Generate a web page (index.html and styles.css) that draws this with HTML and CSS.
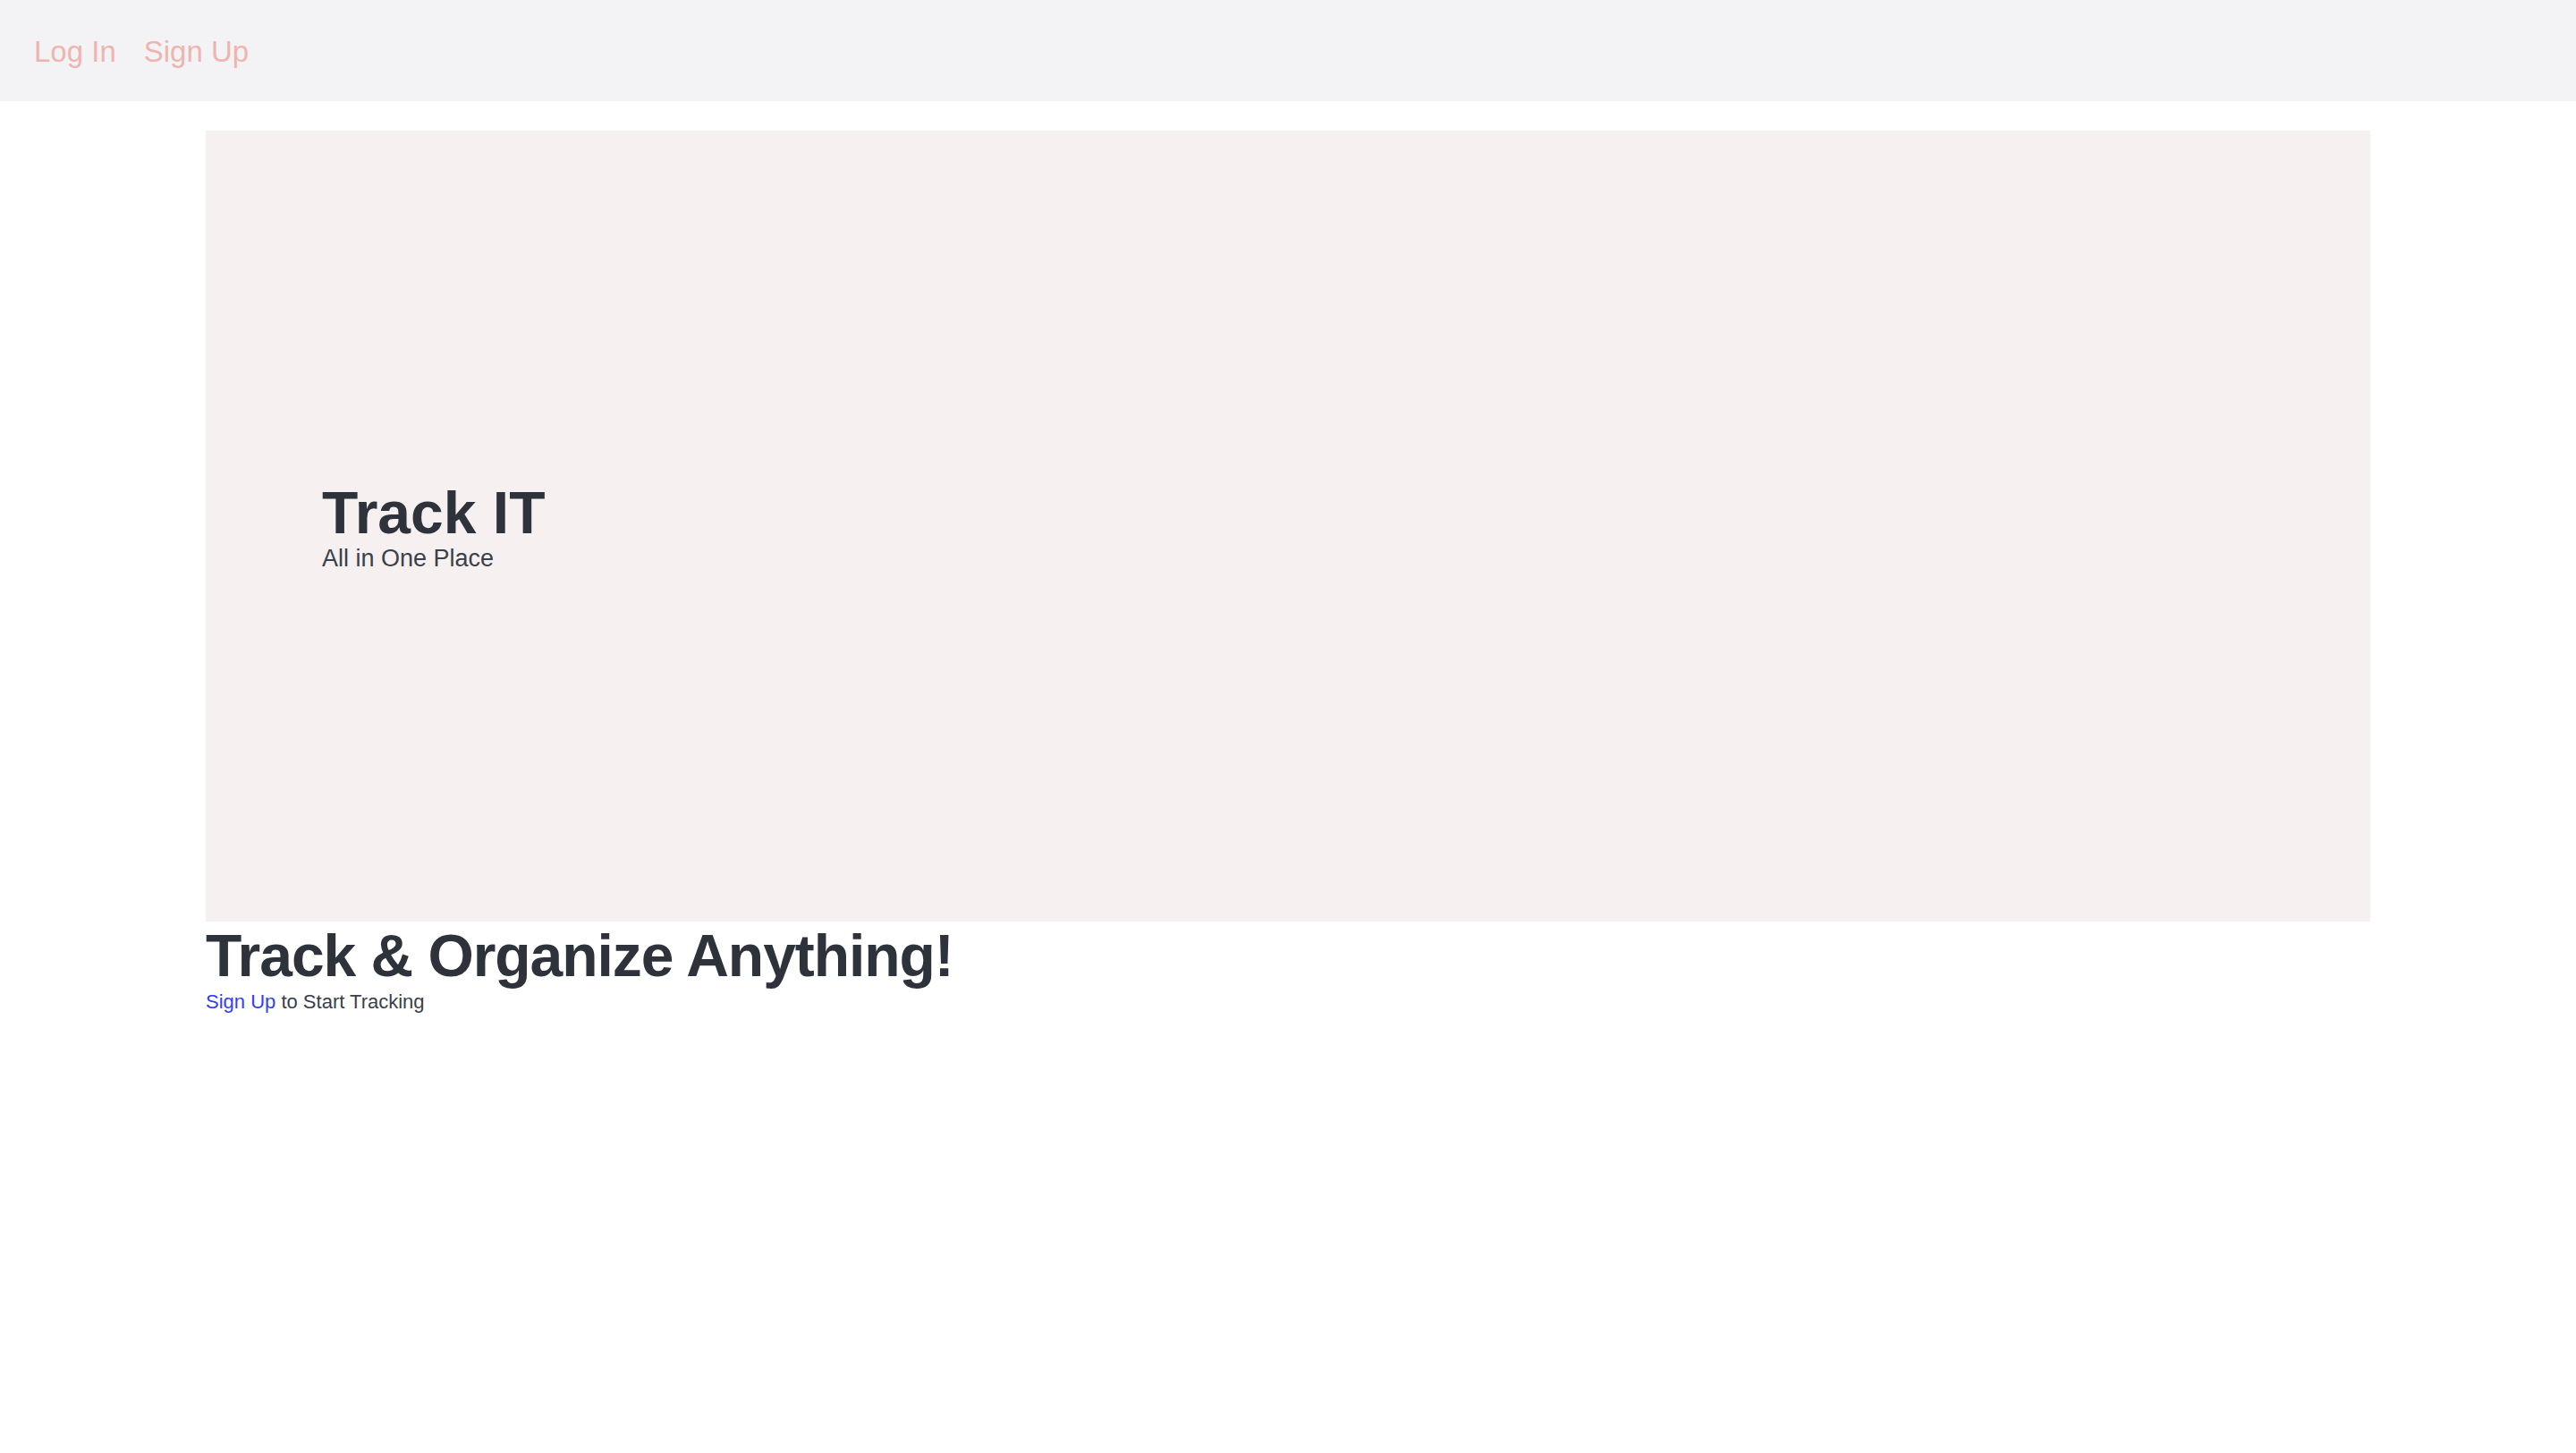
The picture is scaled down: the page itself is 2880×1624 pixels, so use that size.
FILE: index.html
```html
<!DOCTYPE html>
<html lang="en">
<head>
<meta charset="utf-8">
<title>Track IT</title>
<link rel="stylesheet" href="styles.css">
</head>
<body>
<nav class="topnav">
  <a class="nav-link" href="#">Log In</a>
  <a class="nav-link" href="#">Sign Up</a>
</nav>
<main class="container">
  <section class="hero">
    <h1 class="hero-title">Track IT</h1>
    <p class="hero-sub">All in One Place</p>
  </section>
  <h2 class="headline">Track &amp; Organize Anything!</h2>
  <p class="cta"><a class="cta-link" href="#">Sign Up</a> to Start Tracking</p>
</main>
</body>
</html>
```
FILE: styles.css
```css
html, body {
  margin: 0;
  padding: 0;
  background: #ffffff;
  font-family: "Liberation Sans", Arial, sans-serif;
  color: #2e323b;
}

.topnav {
  height: 113px;
  box-sizing: border-box;
  padding: 3px 0 0 38px;
  background: #f3f3f5;
  display: flex;
  align-items: center;
  gap: 31px;
}

.nav-link {
  font-size: 33px;
  color: #eeb5b0;
  text-decoration: none;
}

.container {
  margin: 33px 230px 0;
}

.hero {
  height: 884px;
  background: #f6f0f0;
  display: flex;
  flex-direction: column;
  justify-content: center;
  padding-left: 130px;
}

.hero-title {
  margin: 0;
  font-size: 66px;
  line-height: 72px;
  font-weight: 700;
  color: #2e323b;
}

.hero-sub {
  margin: 0;
  font-size: 27px;
  line-height: 31px;
  color: #3b404b;
}

.headline {
  margin: 0;
  font-size: 66px;
  line-height: 76px;
  font-weight: 700;
  color: #2e323b;
  letter-spacing: -1.05px;
}

.cta {
  margin: 0;
  font-size: 22px;
  line-height: 28px;
  color: #3b404b;
}

.cta-link {
  color: #3340f5;
  text-decoration: none;
}
```
